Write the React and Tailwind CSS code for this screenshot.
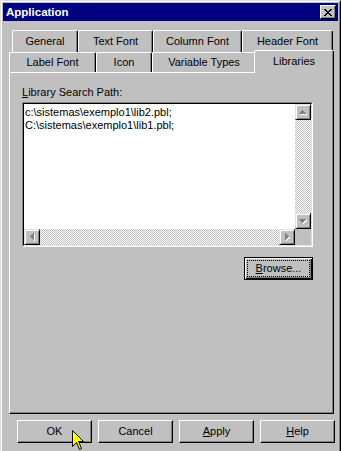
import React from "react";

const raised =
  "border border-t-white border-l-white border-r-black border-b-black shadow-[inset_-1px_-1px_#808080]";

const scrollBtn =
  "w-[16px] h-[16px] flex items-center justify-center bg-[#c0c0c0] border border-t-[#dfdfdf] border-l-[#dfdfdf] border-r-black border-b-black shadow-[inset_1px_1px_#ffffff,inset_-1px_-1px_#808080]";

const checker =
  "bg-[image:repeating-conic-gradient(#c0c0c0_0_25%,#ffffff_0_50%)] bg-[length:2px_2px]";

// rows/cols of the little disabled triangles, as [x, y, w, h]
const GLYPHS = {
  up: [[3, 0, 1, 1], [2, 1, 3, 1], [1, 2, 5, 1], [0, 3, 7, 1]],
  down: [[0, 0, 7, 1], [1, 1, 5, 1], [2, 2, 3, 1], [3, 3, 1, 1]],
  left: [[0, 3, 1, 1], [1, 2, 1, 3], [2, 1, 1, 5], [3, 0, 1, 7]],
  right: [[0, 0, 1, 7], [1, 1, 1, 5], [2, 2, 1, 3], [3, 3, 1, 1]],
};

const Arrow = ({ dir }) => {
  const vertical = dir === "up" || dir === "down";
  const w = vertical ? 8 : 5;
  const h = vertical ? 5 : 8;
  return (
    <svg width={w} height={h} shapeRendering="crispEdges">
      {GLYPHS[dir].map(([x, y, rw, rh], i) => (
        <rect key={"s" + i} x={x + 1} y={y + 1} width={rw} height={rh} fill="#ffffff" />
      ))}
      {GLYPHS[dir].map(([x, y, rw, rh], i) => (
        <rect key={"g" + i} x={x} y={y} width={rw} height={rh} fill="#808080" />
      ))}
    </svg>
  );
};

const CloseGlyph = () => {
  const px = [
    [0, 0, 2], [6, 0, 2],
    [1, 1, 2], [5, 1, 2],
    [2, 2, 4],
    [3, 3, 2],
    [2, 4, 4],
    [1, 5, 2], [5, 5, 2],
    [0, 6, 2], [6, 6, 2],
  ];
  return (
    <svg width="8" height="7" shapeRendering="crispEdges">
      {px.map(([x, y, w], i) => (
        <rect key={i} x={x} y={y} width={w} height="1" fill="#000" />
      ))}
    </svg>
  );
};

const Tab = ({ children, className }) => (
  <div
    className={
      "flex items-center justify-center bg-[#c0c0c0] border-l border-t border-r border-l-white border-t-white border-r-black rounded-t-[2px] shadow-[inset_-1px_0_#808080] " +
      className
    }
  >
    {children}
  </div>
);

const Button = ({ children }) => (
  <div className={"w-[75px] h-[23px] flex items-center justify-center bg-[#c0c0c0] " + raised}>
    {children}
  </div>
);

export default function App() {
  return (
    <div className="relative w-[341px] h-[451px] overflow-hidden bg-[#c0c0c0] font-['Liberation_Sans',Arial,sans-serif] text-[11px] leading-[13px] text-black">
      <div className="w-[341px] h-[470px] border border-t-[#dfdfdf] border-l-[#dfdfdf] border-r-black border-b-black">
        <div className="h-full border border-t-white border-l-white border-r-[#808080] border-b-[#808080] p-px">
          {/* title bar */}
          <div className="flex items-center justify-between h-[18px] bg-[#000080] pl-[3px] pr-[2px]">
            <span className="text-white font-bold text-[11.5px]">Application</span>
            <div className={"w-[16px] h-[14px] flex items-center justify-center bg-[#c0c0c0] " + raised}>
              <CloseGlyph />
            </div>
          </div>

          <div className="pl-[6px] pt-[9px]">
            {/* back row of tabs */}
            <div className="flex h-[22px] pl-[3px]">
              <Tab className="w-[66px] h-full">General</Tab>
              <Tab className="w-[75px] h-full">Text Font</Tab>
              <Tab className="w-[89px] h-full">Column Font</Tab>
              <Tab className="w-[91px] h-full">Header Font</Tab>
            </div>
            {/* front row of tabs */}
            <div className="flex items-start h-[20px]">
              <Tab className="w-[87px] h-[20px]">Label Font</Tab>
              <Tab className="w-[56px] h-[20px]">Icon</Tab>
              <Tab className="w-[104px] h-[20px]">Variable Types</Tab>
              <Tab className="relative z-10 w-[80px] h-[23px] -ml-[2px] -mt-[2px] pb-[1px]">Libraries</Tab>
            </div>

            {/* tab page */}
            <div className="w-[325px] h-[342px] border border-t-white border-l-white border-r-black border-b-black shadow-[inset_-1px_-1px_#808080] pl-[12px] pt-[13px]">
              <div>
                <u>L</u>ibrary Search Path:
              </div>
              <div className="mt-[3px] w-[291px] h-[145px] border border-t-[#808080] border-l-[#808080] border-r-white border-b-white">
                <div className="h-full border border-t-black border-l-black border-r-[#dfdfdf] border-b-[#dfdfdf] grid grid-cols-[1fr_16px] grid-rows-[1fr_16px]">
                  <div className="bg-white pl-[1px] pt-[2px]">
                    <div>c:\sistemas\exemplo1\lib2.pbl;</div>
                    <div>C:\sistemas\exemplo1\lib1.pbl;</div>
                  </div>
                  <div className="flex flex-col">
                    <div className={scrollBtn}>
                      <Arrow dir="up" />
                    </div>
                    <div className={"flex-1 " + checker} />
                    <div className={scrollBtn}>
                      <Arrow dir="down" />
                    </div>
                  </div>
                  <div className="flex">
                    <div className={scrollBtn}>
                      <Arrow dir="left" />
                    </div>
                    <div className={"flex-1 " + checker} />
                    <div className={scrollBtn}>
                      <Arrow dir="right" />
                    </div>
                  </div>
                  <div className="bg-[#c0c0c0]" />
                </div>
              </div>

              <div className="flex justify-end w-[291px] mt-[10px]">
                <div className="w-[69px] h-[23px] bg-[#c0c0c0] border border-black shadow-[inset_1px_1px_#ffffff,inset_-1px_-1px_#000000,inset_-2px_-2px_#808080] p-[2px]">
                  <div className="h-full flex items-center justify-center border border-dotted border-black">
                    <span>
                      <u>B</u>rowse...
                    </span>
                  </div>
                </div>
              </div>
            </div>

            {/* dialog buttons */}
            <div className="flex gap-[6px] mt-[6px] ml-[8px]">
              <Button>OK</Button>
              <Button>Cancel</Button>
              <Button>
                <span>
                  <u>A</u>pply
                </span>
              </Button>
              <Button>
                <span>
                  <u>H</u>elp
                </span>
              </Button>
            </div>
          </div>
        </div>
      </div>

      {/* mouse pointer */}
      <svg className="absolute left-[72px] top-[430px]" width="13" height="21">
        <polygon
          points="0.5,0.5 0.5,16.5 4.5,12.5 7.5,19.5 9.5,18.5 6.5,11.5 11.5,11.5"
          fill="#ffff00"
          stroke="#000"
          strokeWidth="1"
          strokeLinejoin="miter"
        />
      </svg>
    </div>
  );
}
